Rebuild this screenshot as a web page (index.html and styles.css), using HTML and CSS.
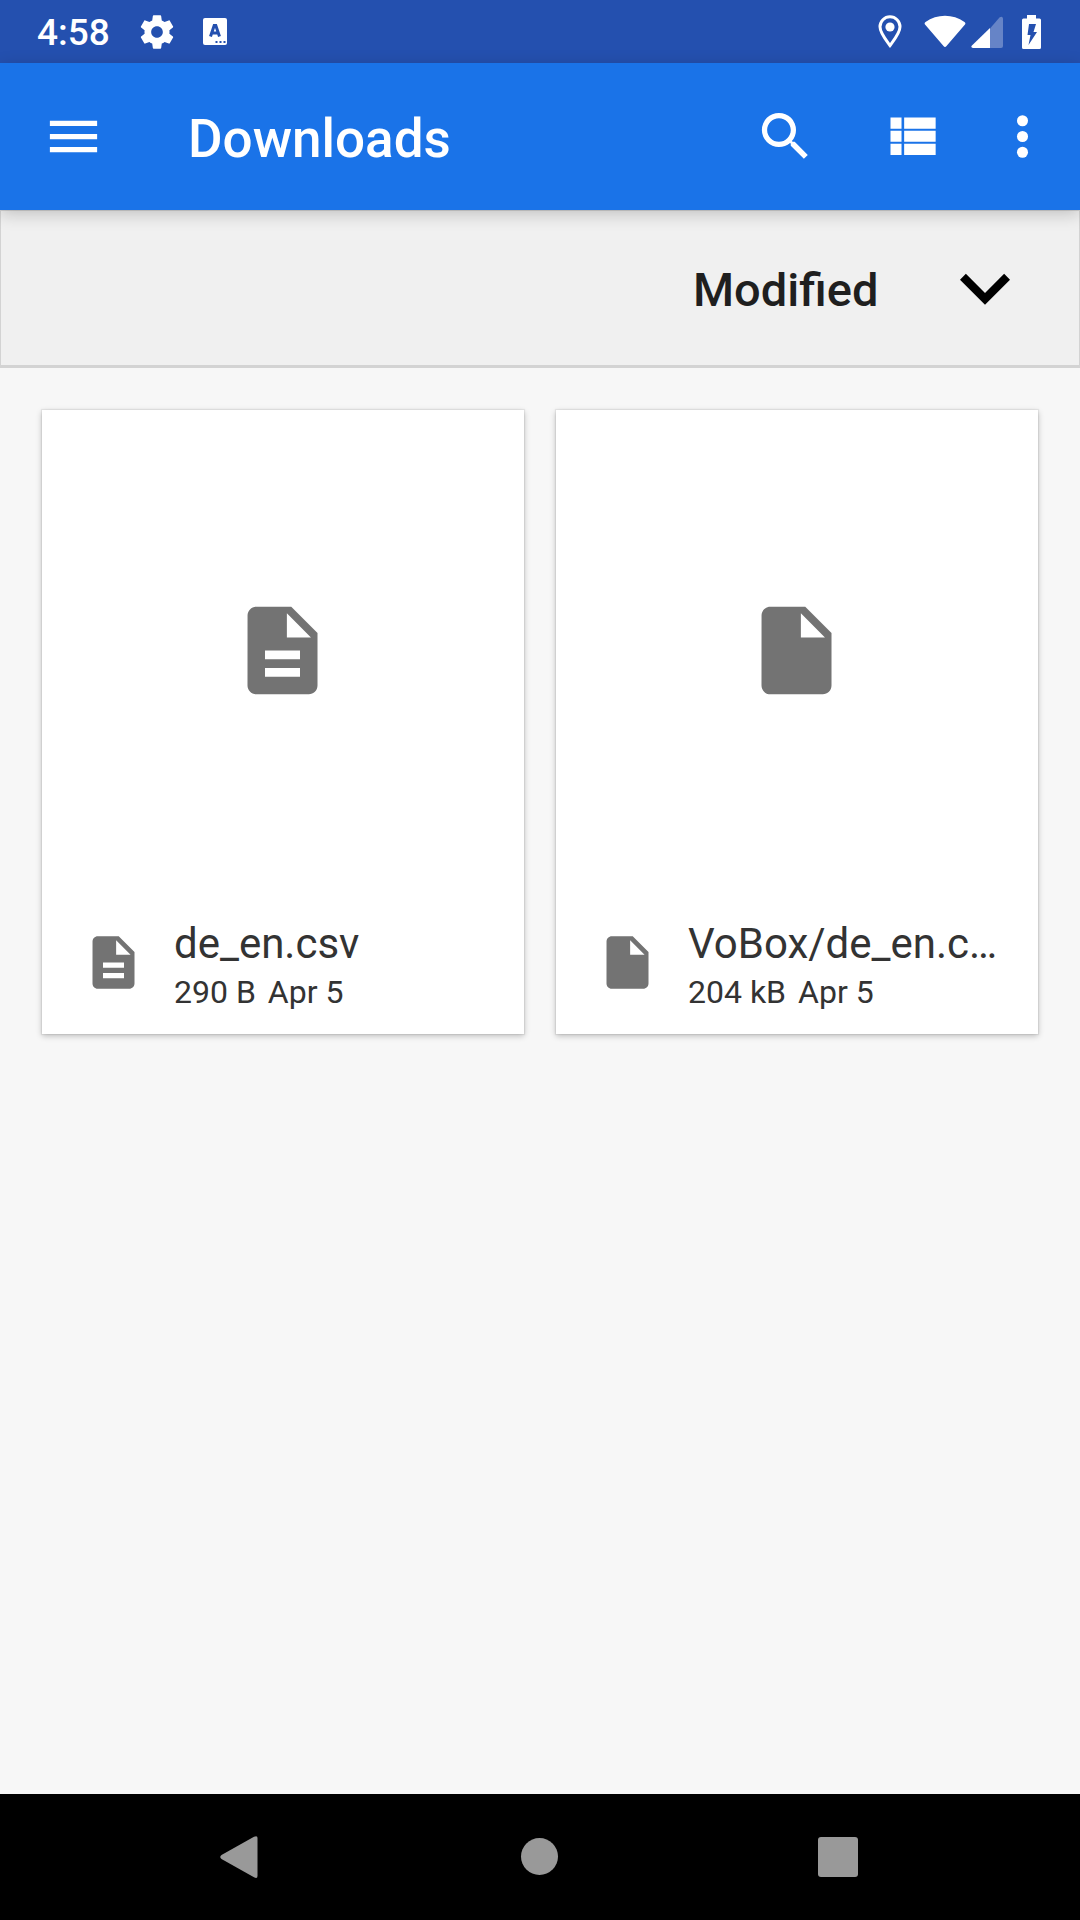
FILE: index.html
```html
<!DOCTYPE html>
<html lang="en">
<head>
<meta charset="utf-8">
<meta name="viewport" content="width=device-width, initial-scale=1">
<title>Downloads</title>
<link rel="stylesheet" href="styles.css">
</head>
<body>
<div class="status-bar">
  <time class="clock">4:58</time>
  <div class="notifications">
    <svg width="40" height="40" viewBox="0 0 24 24" aria-hidden="true"><path d="M19.43 12.98c.04-.32.07-.64.07-.98s-.03-.66-.07-.98l2.11-1.65c.19-.15.24-.42.12-.64l-2-3.46c-.12-.22-.39-.3-.61-.22l-2.49 1c-.52-.4-1.08-.73-1.69-.98l-.38-2.65A.488.488 0 0 0 14 2h-4c-.25 0-.46.18-.49.42l-.38 2.65c-.61.25-1.17.59-1.69.98l-2.49-1c-.23-.09-.49 0-.61.22l-2 3.46c-.13.22-.07.49.12.64l2.11 1.65c-.04.32-.07.65-.07.98s.03.66.07.98l-2.11 1.65c-.19.15-.24.42-.12.64l2 3.46c.12.22.39.3.61.22l2.49-1c.52.4 1.08.73 1.69.98l.38 2.65c.03.24.24.42.49.42h4c.25 0 .46-.18.49-.42l.38-2.65c.61-.25 1.17-.59 1.69-.98l2.49 1c.23.09.49 0 .61-.22l2-3.46c.12-.22.07-.49-.12-.64l-2.11-1.65zM12 15.5c-1.93 0-3.5-1.57-3.5-3.5s1.57-3.5 3.5-3.5 3.5 1.57 3.5 3.5-1.57 3.5-3.5 3.5z"/></svg>
    <svg width="24" height="27" viewBox="0 0 24 27" aria-hidden="true"><rect width="24" height="27" rx="2"/><path class="cutout-line" d="M7.500 18.500L11.200 7.500h1.600L16.500 18.500M9 15h6"/><path class="cutout" d="M12.500 23h2v2h-2zm4 0h2v2h-2zm4 0h2v2h-2z"/></svg>
  </div>
  <div class="indicators">
    <svg class="location" width="24" height="34" viewBox="0 0 24 34" aria-hidden="true"><path class="outline" d="M12 30.500C8 25 2 18 2 11.800a10 10 0 0 1 20 0C22 18 16 25 12 30.500z"/><circle cx="12" cy="12" r="4.600"/></svg>
    <svg class="wifi" width="42" height="34" viewBox="0 0 42 34" aria-hidden="true"><path d="M1 9.500Q0 8 1.500 7C13-1.500 29-1.500 40.500 7q1.500 1 .5 2.500L22.500 31q-1.500 1.800-3 0z"/></svg>
    <svg class="signal" width="32" height="32" viewBox="0 0 32 32" aria-hidden="true"><path class="faint" d="M19 12.500L28.700 1.300Q31.500-.5 32 2.500V30q0 2-2 2H19z"/><path d="M19 12v20H2q-2.500-.5-1.300-2.300z"/></svg>
    <svg width="19" height="34" viewBox="0 0 19 34" aria-hidden="true"><path d="M5 0h9v3.500h3.500Q19 3.500 19 5v27.500q0 1.500-1.500 1.500h-16Q0 34 0 32.500V5q0-1.500 1.500-1.500H5z"/><path class="cutout" d="M7 9h7l-2.500 8H15L6.500 30 8.500 20H5.500z"/></svg>
  </div>
</div>

<header class="toolbar">
  <button class="icon-button menu" type="button" aria-label="Show roots">
    <svg class="icon" viewBox="0 0 24 24" aria-hidden="true"><path d="M3 18h18v-2H3v2zm0-5h18v-2H3v2zm0-7v2h18V6H3z"/></svg>
  </button>
  <h1 class="title">Downloads</h1>
  <button class="icon-button" type="button" aria-label="Search">
    <svg class="icon" viewBox="0 0 24 24" aria-hidden="true"><path d="M15.500 14h-.79l-.28-.27A6.471 6.471 0 0 0 16 9.500 6.500 6.500 0 1 0 9.500 16c1.610 0 3.090-.59 4.230-1.570l.27.28v.79l5 4.990L20.490 19l-4.990-5zm-6 0C7.010 14 5 11.990 5 9.500S7.010 5 9.500 5 14 7.010 14 9.500 11.990 14 9.500 14z"/></svg>
  </button>
  <button class="icon-button" type="button" aria-label="List view">
    <svg class="icon" viewBox="0 0 24 24" aria-hidden="true"><path d="M4 14h4.200v-4.200H4zm0 5h4.200v-4.200H4zM4 9h4.200V4.800H4zm5.200 5h12V9.800h-12zm0 5h12v-4.200h-12zm0-14.200V9h12V4.800z"/></svg>
  </button>
  <button class="icon-button more" type="button" aria-label="More options">
    <svg class="icon" viewBox="0 0 24 24" aria-hidden="true"><circle cx="12" cy="6" r="2.100"/><circle cx="12" cy="12" r="2.100"/><circle cx="12" cy="18" r="2.100"/></svg>
  </button>
</header>

<div class="sort-bar">
  <select class="sort-key" aria-label="Sort by"><option>Modified</option></select>
  <button class="sort-direction" type="button" aria-label="Descending">
    <svg width="100" height="100" viewBox="0 0 24 24" aria-hidden="true"><path d="M16.590 8.590L12 13.170 7.410 8.590 6 10l6 6 6-6z"/></svg>
  </button>
</div>

<main class="files">
  <article class="card">
    <div class="thumbnail">
      <svg class="file-icon-large" viewBox="0 0 24 24" aria-hidden="true"><path d="M14 2H6c-1.100 0-1.990.9-1.990 2L4 20c0 1.100.89 2 1.990 2H18c1.100 0 2-.9 2-2V8l-6-6zm2 16H8v-2h8v2zm0-4H8v-2h8v2zm-3-5V3.500L18.500 9H13z"/></svg>
    </div>
    <div class="details">
      <svg class="icon" viewBox="0 0 24 24" aria-hidden="true"><path d="M14 2H6c-1.100 0-1.990.9-1.990 2L4 20c0 1.100.89 2 1.990 2H18c1.100 0 2-.9 2-2V8l-6-6zm2 16H8v-2h8v2zm0-4H8v-2h8v2zm-3-5V3.500L18.500 9H13z"/></svg>
      <div class="text">
        <h2 class="name">de_en.csv</h2>
        <p class="meta"><span>290 B</span><span>Apr 5</span></p>
      </div>
    </div>
  </article>
  <article class="card">
    <div class="thumbnail">
      <svg class="file-icon-large" viewBox="0 0 24 24" aria-hidden="true"><path d="M6 2c-1.100 0-1.990.9-1.990 2L4 20c0 1.100.89 2 1.990 2H18c1.100 0 2-.9 2-2V8l-6-6H6zm7 7V3.500L18.500 9H13z"/></svg>
    </div>
    <div class="details">
      <svg class="icon" viewBox="0 0 24 24" aria-hidden="true"><path d="M6 2c-1.100 0-1.990.9-1.990 2L4 20c0 1.100.89 2 1.990 2H18c1.100 0 2-.9 2-2V8l-6-6H6zm7 7V3.500L18.500 9H13z"/></svg>
      <div class="text">
        <h2 class="name">VoBox/de_en.c…</h2>
        <p class="meta"><span>204 kB</span><span>Apr 5</span></p>
      </div>
    </div>
  </article>
</main>

<nav class="nav-bar" aria-label="System navigation">
  <button class="nav-button" type="button" aria-label="Back">
    <svg width="42" height="42" viewBox="0 0 42 42" aria-hidden="true"><path d="M1.500 23q-2.500-2 0-4L34 .8Q37.500-1 37.500 2v38q0 3-3.500 1.200z"/></svg>
  </button>
  <button class="nav-button" type="button" aria-label="Home">
    <svg width="42" height="42" viewBox="0 0 42 42" aria-hidden="true"><circle cx="20.500" cy="20.500" r="18.500"/></svg>
  </button>
  <button class="nav-button" type="button" aria-label="Recent apps">
    <svg width="42" height="42" viewBox="0 0 42 42" aria-hidden="true"><rect x="0" y="1" width="40" height="40" rx="3"/></svg>
  </button>
</nav>
</body>
</html>
```
FILE: styles.css
```css
* {
  box-sizing: border-box;
}

body {
  margin: 0;
  min-height: 100vh;
  display: flex;
  flex-direction: column;
  background: #f7f7f7;
  color: #333;
  font-family: Roboto, "Liberation Sans", sans-serif;
}

svg {
  display: block;
  flex: none;
  fill: currentColor;
}

button,
select {
  margin: 0;
  padding: 0;
  border: 0;
  background: none;
  color: inherit;
  font: inherit;
}

button {
  display: flex;
  align-items: center;
  justify-content: center;
}

h1,
h2,
p {
  margin: 0;
}

.icon {
  width: 63px;
  height: 63px;
}

/* Status bar */
.status-bar {
  height: 63px;
  padding: 0 39px 0 37px;
  display: flex;
  align-items: center;
  background: #2450af;
  color: #fff;
}

.clock {
  padding-top: 2px;
  font-size: 37px;
  line-height: 44px;
  font-weight: 500;
}

.notifications {
  display: flex;
  align-items: center;
  gap: 26px;
  margin-left: 27px;
}

.indicators {
  display: flex;
  align-items: center;
  margin-left: auto;
}

.cutout {
  fill: #2450af;
}

.cutout-line {
  fill: none;
  stroke: #2450af;
  stroke-width: 3;
}

.outline {
  fill: none;
  stroke: currentColor;
  stroke-width: 3;
}

.faint {
  opacity: 0.3;
}

.location {
  margin-right: 22px;
}

.wifi {
  margin-right: 5px;
}

.signal {
  margin-right: 19px;
}

/* Toolbar */
.toolbar {
  position: relative;
  height: 147px;
  padding-right: 10px;
  display: flex;
  align-items: center;
  background: #1a73e8;
  color: #fff;
  box-shadow: 0 4px 16px rgba(0, 0, 0, 0.2);
}

.icon-button {
  width: 126px;
  height: 126px;
}

.menu {
  width: 147px;
}

.more {
  width: 96px;
}

.title {
  flex: 1;
  padding: 4px 0 0 41px;
  font-size: 53px;
  line-height: 62px;
  font-weight: 500;
}

/* Sort bar */
.sort-bar {
  height: 158px;
  padding-right: 44px;
  display: flex;
  align-items: center;
  justify-content: flex-end;
  gap: 56px;
  border: 1px solid #d3d3d3;
  border-bottom-width: 3px;
  background: #f0f0f0;
  color: #1f1f1f;
}

.sort-key {
  appearance: none;
  padding-top: 4px;
  font-size: 47px;
  line-height: 56px;
  font-weight: 500;
}

.sort-direction {
  color: #000;
}

/* File grid */
.files {
  flex: 1;
  padding: 42px;
  display: grid;
  grid-template-columns: 1fr 1fr;
  align-content: start;
  gap: 32px;
}

.card {
  background: #fff;
  box-shadow: 0 0 1px 1px rgba(0, 0, 0, 0.06), 0 2px 6px rgba(0, 0, 0, 0.24);
}

.thumbnail {
  aspect-ratio: 1;
  padding: 0 2px 2px 0;
  display: flex;
  align-items: center;
  justify-content: center;
  color: #737373;
}

.file-icon-large {
  width: 105px;
  height: 105px;
}

.details {
  height: 142px;
  padding: 0 24px 2px 40px;
  display: flex;
  align-items: center;
  gap: 29px;
  color: #737373;
}

.text {
  min-width: 0;
  padding-top: 10px;
  color: #333;
}

.name {
  font-size: 42px;
  line-height: 50px;
  font-weight: 400;
  white-space: nowrap;
}

.meta {
  display: flex;
  gap: 12px;
  font-size: 32px;
  line-height: 46px;
}

/* Navigation bar */
.nav-bar {
  height: 126px;
  padding: 0 91px;
  display: grid;
  grid-template-columns: repeat(3, 1fr);
  background: #000;
  color: #999;
}
```
